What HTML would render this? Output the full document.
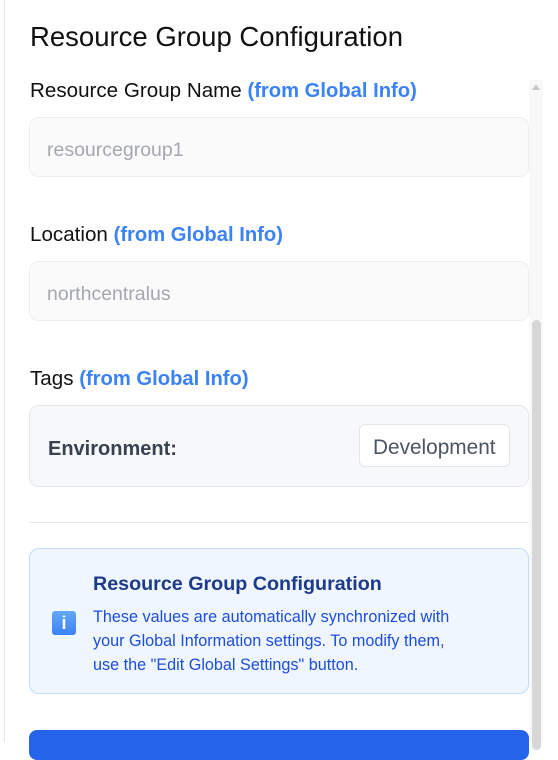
<!DOCTYPE html>
<html><head><style>
*{margin:0;padding:0;box-sizing:border-box}
body{width:558px;height:742px;overflow:hidden;background:#fff;font-family:"Liberation Sans",sans-serif;position:relative}
.lb{position:absolute;left:4px;top:0;width:1px;height:742px;background:#e5e7eb}
.h1{position:absolute;left:30px;top:21px;font-size:27.5px;color:#111;font-weight:500}
.lbl{position:absolute;left:30px;font-size:20.6px;color:#111}
.lbl span{color:#3b82f6;font-weight:bold;font-size:20.2px}
.inp{position:absolute;left:29px;width:500px;height:60px;border:1px solid #eceef1;border-radius:10px;background:#fafafb;color:#a3a7ae;font-size:19.5px;padding:21px 0 0 17px}
.tags{position:absolute;left:29px;top:405px;width:500px;height:82px;border:1px solid #e5e7eb;border-radius:10px;background:#f7f8fa}
.env{position:absolute;left:18px;top:32px;font-size:20px;font-weight:bold;color:#374151}
.dev{position:absolute;left:329px;top:18px;width:151px;height:43px;border:1px solid #e3e5e8;border-radius:6px;background:#fff;color:#4b5563;font-size:20.8px;padding:11px 0 0 13px}
.hr{position:absolute;left:29px;top:522px;width:500px;height:1px;background:#e5e7eb}
.info{position:absolute;left:29px;top:548px;width:500px;height:146px;border:1px solid #bfdbfe;border-radius:10px;background:#eff6ff}
.it{position:absolute;left:63px;top:24px;font-size:19.7px;font-weight:bold;color:#1e3a8a}
.ip{position:absolute;left:63px;top:56px;font-size:16.2px;line-height:24px;color:#1d4ed8;width:380px}
.ic{position:absolute;left:22px;top:62px;width:24px;height:24px;border-radius:3px;background:linear-gradient(#64a8f6,#3b82f6);color:#fff;font-weight:bold;font-size:18px;text-align:center;line-height:24px}
.btn{position:absolute;left:29px;top:730px;width:500px;height:30px;border-radius:8px;background:#2563eb}
.track{position:absolute;left:529px;top:80px;width:14px;height:662px;background:#f8f8f8}
.thumb{position:absolute;left:532px;top:320px;width:9px;height:430px;border-radius:5px;background:#d7d7d7}
.arr{position:absolute;left:532px;top:84px;width:0;height:0;border-left:4px solid transparent;border-right:4px solid transparent;border-bottom:6px solid #c8c8c8}
</style></head><body>
<div class="lb"></div>
<div class="h1">Resource Group Configuration</div>
<div class="lbl" style="top:79px">Resource Group Name <span>(from Global Info)</span></div>
<div class="inp" style="top:117px">resourcegroup1</div>
<div class="lbl" style="top:223px">Location <span>(from Global Info)</span></div>
<div class="inp" style="top:261px">northcentralus</div>
<div class="lbl" style="top:367px">Tags <span>(from Global Info)</span></div>
<div class="tags"><div class="env">Environment:</div><div class="dev">Development</div></div>
<div class="hr"></div>
<div class="info"><div class="ic">i</div><div class="it">Resource Group Configuration</div><div class="ip">These values are automatically synchronized with your Global Information settings. To modify them, use the "Edit Global Settings" button.</div></div>
<div class="btn"></div>
<div class="track"></div><div class="arr"></div><div class="thumb"></div>
</body></html>
